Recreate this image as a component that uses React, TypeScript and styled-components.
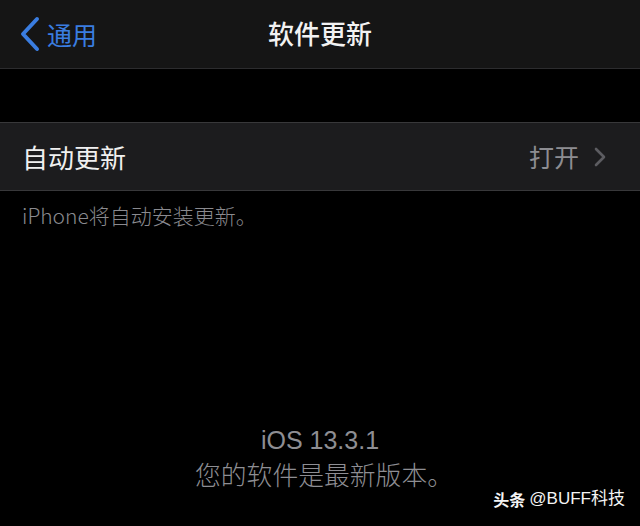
import React from "react";
import styled, { createGlobalStyle } from "styled-components";

const Global = createGlobalStyle`
  html, body { margin: 0; padding: 0; background: #000; }
  body { font-family: "Noto Sans CJK SC", "Noto Sans", sans-serif; }
`;

const Screen = styled.div`
  position: relative;
  width: 640px;
  height: 526px;
  background: #000;
  display: flex;
  flex-direction: column;
  overflow: hidden;
`;

const NavBar = styled.header`
  height: 68px;
  flex: none;
  background: #151515;
  border-bottom: 1px solid #2c2c2e;
  display: grid;
  grid-template-columns: 1fr auto 1fr;
  align-items: center;
`;

const BackButton = styled.div`
  display: flex;
  align-items: center;
  gap: 6px;
  padding-left: 19px;
  color: #3a7de0;
  font-size: 25px;
  line-height: 1;
`;

const NavTitle = styled.h1`
  margin: 0;
  color: #f2f2f2;
  font-size: 26px;
  font-weight: 500;
  line-height: 1;
  margin-top: -2px;
`;

const Gap = styled.div`
  height: 53px;
  flex: none;
`;

const Group = styled.section`
  flex: none;
  background: #1c1c1e;
  border-top: 1px solid #38383a;
  border-bottom: 1px solid #38383a;
`;

const Row = styled.div`
  height: 67px;
  display: flex;
  align-items: center;
  justify-content: space-between;
  padding: 0 34px 0 22px;
`;

const RowLabel = styled.span`
  color: #f0f0f0;
  font-size: 26px;
  line-height: 1;
`;

const RowValue = styled.span`
  display: flex;
  align-items: center;
  gap: 15px;
  color: #8d8d92;
  font-size: 25px;
  line-height: 1;
`;

const Footnote = styled.p`
  margin: 11px 0 0 22px;
  color: #8a8a8f;
  font-size: 21px;
  font-weight: 300;
  line-height: 26px;
`;

const Status = styled.div`
  margin-top: 196px;
  padding-left: 8px;
  display: flex;
  flex-direction: column;
  align-items: center;
  color: #8e8e93;
  font-size: 25.8px;
  font-weight: 300;
  line-height: 33px;
`;

const Version = styled.span`
  font-family: "Liberation Sans", "Noto Sans", sans-serif;
  font-size: 25px;
  margin-right: 8px;
`;

const Watermark = styled.div`
  position: absolute;
  right: 15px;
  bottom: 19px;
  display: flex;
  align-items: center;
  gap: 4px;
  color: #f4f4f4;
  font-size: 16px;
  line-height: 1;
`;

const Brand = styled.b`
  font-weight: 700;
`;

const Handle = styled.span`
  font-family: "Liberation Sans", "Noto Sans CJK SC", sans-serif;
  font-size: 17px;
`;

const BackChevron = () => (
  <svg width="22" height="36" viewBox="0 0 22 36">
    <path
      d="M18 3 L4 18 L18 33"
      fill="none"
      stroke="#3a7de0"
      strokeWidth="4"
      strokeLinecap="round"
      strokeLinejoin="round"
    />
  </svg>
);

const RowChevron = () => (
  <svg width="12" height="20" viewBox="0 0 12 20">
    <path
      d="M2 2 L10 10 L2 18"
      fill="none"
      stroke="#5c5c61"
      strokeWidth="2.6"
      strokeLinecap="round"
      strokeLinejoin="round"
    />
  </svg>
);

export default function App() {
  return (
    <Screen>
      <Global />
      <NavBar>
        <BackButton>
          <BackChevron />
          <span>通用</span>
        </BackButton>
        <NavTitle>软件更新</NavTitle>
        <div />
      </NavBar>
      <Gap />
      <Group>
        <Row>
          <RowLabel>自动更新</RowLabel>
          <RowValue>
            打开
            <RowChevron />
          </RowValue>
        </Row>
      </Group>
      <Footnote>iPhone将自动安装更新。</Footnote>
      <Status>
        <Version>iOS 13.3.1</Version>
        <span>您的软件是最新版本。</span>
      </Status>
      <Watermark>
        <Brand>头条</Brand>
        <Handle>@BUFF科技</Handle>
      </Watermark>
    </Screen>
  );
}
